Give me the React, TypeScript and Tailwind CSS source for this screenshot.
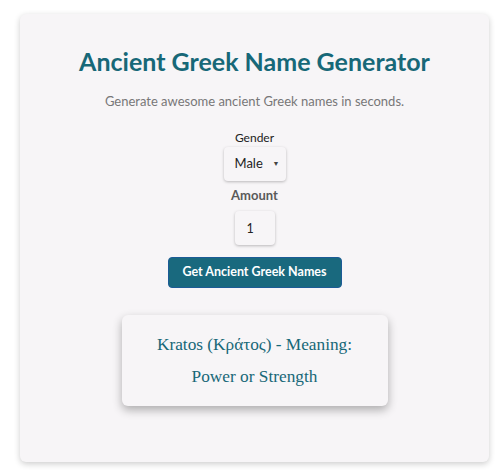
import { useState } from "react";

export default function App() {
  const [gender, setGender] = useState("Male");
  const [amount, setAmount] = useState("1");

  return (
    <div className="min-h-[471px] bg-white px-[20px] pt-[14px] font-['Lato',sans-serif]">
      <div className="w-[469px] h-[448px] rounded-md bg-[#f7f5f7] shadow-[0_2px_6px_rgba(0,0,0,0.2)] flex flex-col items-center pt-[30px]">
        <h1 className="text-[25px] leading-[34px] font-bold text-[#176878]">
          Ancient Greek Name Generator
        </h1>
        <p className="mt-[14px] text-[13px] leading-[18px] text-[#777]">
          Generate awesome ancient Greek names in seconds.
        </p>

        <label className="mt-[20px] text-[12px] leading-[16px] text-[#222]">Gender</label>
        <div className="relative mt-[1px]">
          <select
            value={gender}
            onChange={(e) => setGender(e.target.value)}
            className="appearance-none w-[62px] h-[34px] pl-[11px] bg-[#f7f5f7] text-[13px] text-[#222] rounded-sm shadow-[0_1px_3px_rgba(0,0,0,0.25)] outline-none"
          >
            <option>Male</option>
            <option>Female</option>
          </select>
          <span className="pointer-events-none absolute right-[6px] top-[11px] text-[7px] text-[#444]">▼</span>
        </div>

        <label className="mt-[5px] text-[13px] leading-[18px] font-bold text-[#5a5a5a]">Amount</label>
        <input
          value={amount}
          onChange={(e) => setAmount(e.target.value)}
          className="mt-[7px] w-[40px] h-[34px] pl-[12px] bg-[#f7f5f7] text-[12.5px] text-[#222] rounded-sm shadow-[0_1px_3px_rgba(0,0,0,0.25)] outline-none"
        />

        <button className="mt-[12px] w-[174px] h-[31px] rounded-[4px] bg-[#19697e] border border-[#1c5b96] text-white text-[12.5px] font-bold">
          Get Ancient Greek Names
        </button>

        <div className="mt-[27px] w-[266px] h-[91px] rounded-md bg-[#f7f5f7] shadow-[0_4px_10px_rgba(0,0,0,0.3)] flex flex-col items-center justify-center gap-[12px] font-['Liberation_Serif',serif] text-[17.3px] leading-[20px] text-[#176878]">
          <p>Kratos (Κράτος) - Meaning:</p>
          <p>Power or Strength</p>
        </div>
      </div>
    </div>
  );
}
